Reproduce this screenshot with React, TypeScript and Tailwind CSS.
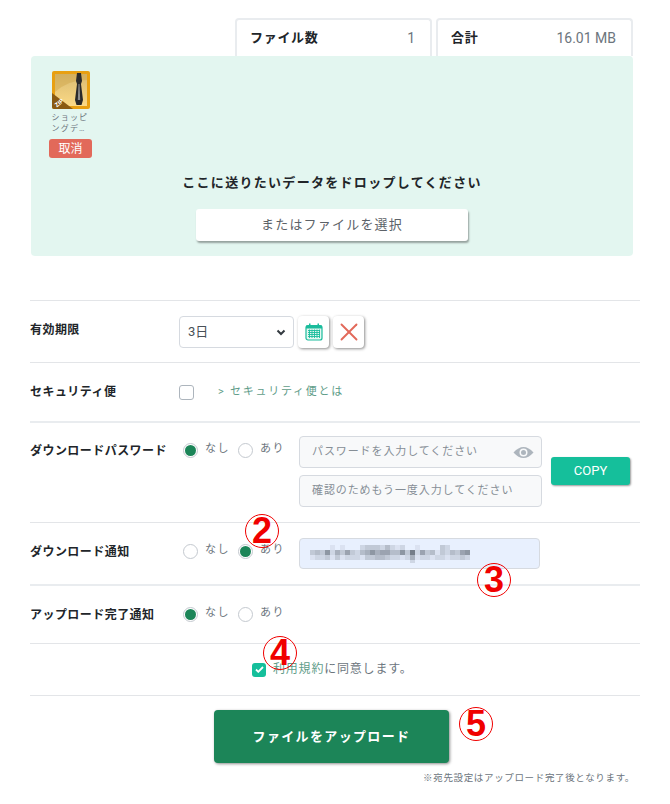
import { X } from 'lucide-react';

const font = 'font-["Roboto","Noto_Sans_CJK_JP",sans-serif]';

// blurred mail address in the screenshot, one digit per cell = darkness
const mosaicRows = [
  '00001010002333242120010000320000',
  '34372536324575664473926341324367',
  '12231312221334432212512212212232',
  '00000000000000000000200000000000',
];

function Radio({ checked }: { checked?: boolean }) {
  return (
    <span className="flex h-[15px] w-[15px] items-center justify-center rounded-full border border-[#c4c9cf] bg-white">
      {checked && <span className="h-[11px] w-[11px] rounded-full bg-[#1c8558]" />}
    </span>
  );
}

function RadioPair({ value }: { value: 'none' | 'yes' }) {
  return (
    <div className="flex w-[120px] items-center self-start pl-[4px] text-[11px] tracking-[1.5px] text-[#6c757d]">
      <Radio checked={value === 'none'} />
      <span className="ml-[7px] w-[33px] -translate-y-[1px]">なし</span>
      <Radio checked={value === 'yes'} />
      <span className="ml-[7px] -translate-y-[1px]">あり</span>
    </div>
  );
}

function Mark({ n, className }: { n: number; className: string }) {
  return (
    <div
      className={`absolute flex h-[34px] w-[34px] items-center justify-center rounded-full border border-[#f00000] text-[36px] leading-none font-bold text-[#f00000] font-["Liberation_Sans",sans-serif] ${className}`}
    >
      {n}
    </div>
  );
}

function FileIcon() {
  return (
    <svg width="38" height="38" viewBox="0 0 38 38">
      <defs>
        <linearGradient id="g" x1="0" y1="0" x2="0" y2="1">
          <stop offset="0" stopColor="#d9bb72" />
          <stop offset="1" stopColor="#fbd985" />
        </linearGradient>
      </defs>
      <rect width="38" height="38" rx="2" fill="#e8a012" />
      <rect x="3" y="3" width="32" height="32" fill="url(#g)" />
      <path d="M3 3h32v6Q16 9 3 21z" fill="#c99a3a" opacity="0.35" />
      <path d="M0 22 L21 38 H2 Q0 38 0 36 Z" fill="#8a5a12" />
      <path d="M25 2h4l1 8-1 3 2 16-1.500 5h-5L23 29l2-16-1-3z" fill="#2a2a2a" />
      <path d="M26.500 13h1l.7 16h-2.400z" fill="#8d8d8d" />
      <text x="3" y="35" fontSize="6" fontWeight="700" fill="#fff" transform="rotate(-38 6 33)" fontFamily="Roboto, sans-serif">
        ZIP
      </text>
    </svg>
  );
}

function CalendarIcon() {
  return (
    <svg width="18" height="18" viewBox="0 0 18 18" fill="none">
      <rect x="1" y="2.500" width="16" height="14.500" rx="2" fill="#e4f7f1" stroke="#1abc9c" strokeWidth="1.200" />
      <rect x="1" y="2.500" width="16" height="3" fill="#1abc9c" />
      <rect x="4" y="0.500" width="1.500" height="4" fill="#1abc9c" />
      <rect x="12.500" y="0.500" width="1.500" height="4" fill="#1abc9c" />
      <path d="M3 7.500h12M3 9.500h12M3 11.500h12M3 13.500h12M4.500 6.500v8.500M7 6.500v8.500M9.500 6.500v8.500M12 6.500v8.500M14.500 6.500v8.500" stroke="#1abc9c" strokeWidth="0.900" />
    </svg>
  );
}

function EyeIcon() {
  return (
    <svg width="21" height="13" viewBox="0 0 21 13">
      <path d="M0.500 6.500Q10.500 -4.500 20.500 6.500Q10.500 17.500 0.500 6.500z" fill="#adb5bd" />
      <circle cx="10.500" cy="6.500" r="4" fill="#f8f9fa" />
      <circle cx="10.500" cy="6.500" r="2.500" fill="#adb5bd" />
    </svg>
  );
}

function Chevron() {
  return (
    <svg width="10" height="7" viewBox="0 0 10 7" fill="none">
      <path d="M1.500 1.500 5 5l3.500-3.500" stroke="#343a40" strokeWidth="2" />
    </svg>
  );
}

function Label({ children }: { children: string }) {
  return <div className="w-[149px] shrink-0 text-[12px] font-bold tracking-[0.45px] whitespace-nowrap text-[#212529]">{children}</div>;
}

export default function App() {
  return (
    <main className={`relative min-h-[804px] w-[670px] bg-white px-[30px] pt-[18px] ${font}`}>
      <div className="ml-[205px] flex gap-[4px]">
        {[
          ['ファイル数', '1'],
          ['合計', '16.01 MB'],
        ].map(([k, v]) => (
          <div
            key={k}
            className="flex h-[38px] w-[197px] items-center justify-between rounded-t border-2 border-b-0 border-[#e9ecef] pr-[15px] pl-[13px]"
          >
            <span className="text-[13px] font-bold tracking-[0.7px] text-[#212529]">{k}</span>
            <span className="text-[14px] text-[#6c757d]">{v}</span>
          </div>
        ))}
      </div>

      <section className="ml-[1px] h-[200px] w-[602px] rounded bg-[#e3f6f0] px-[18px] pt-[15px]">
        <div className="flex w-[43px] flex-col items-center">
          <FileIcon />
          <div className="mt-[3px] h-[24px] w-[38px] text-[8px] leading-[11px] tracking-[1.2px] break-all text-[#6c757d]">
            ショッピングデ…
          </div>
          <div className="mt-[3px] flex h-[19px] w-[43px] items-center justify-center rounded-[3px] bg-[#e2695a] text-[12px] text-white">
            取消
          </div>
        </div>
        <p className="mt-[15px] text-center text-[13px] font-bold tracking-[1.3px] text-[#212529]">ここに送りたいデータをドロップしてください</p>
        <button className="mx-auto mt-[16px] block h-[32px] w-[272px] rounded-[3px] bg-white text-[13px] tracking-[1.2px] text-[#5c6268] shadow-[1px_2px_2px_rgba(0,0,0,0.35)]">
          またはファイルを選択
        </button>
      </section>

      <div className="mt-[44px]">
        <div className="flex h-[62px] items-start border-t border-[#e3e5e8] pt-[20px]">
          <Label>有効期限</Label>
          <div className="-mt-[5px] flex items-start gap-[4px]">
            <div className="flex h-[32px] w-[115px] items-center justify-between rounded border border-[#d6dae0] pr-[7px] pl-[8px] text-[13px] text-[#495057]">
              <span>3日</span>
              <Chevron />
            </div>
            <button className="flex h-[32px] w-[31px] items-center justify-center rounded bg-white shadow-[1px_1px_3px_rgba(0,0,0,0.45)]">
              <CalendarIcon />
            </button>
            <button className="flex h-[32px] w-[31px] items-center justify-center rounded bg-white shadow-[1px_1px_3px_rgba(0,0,0,0.45)]">
              <X size={30} strokeWidth={1.5} className="shrink-0 text-[#e2695a]" />
            </button>
          </div>
        </div>

        <div className="flex h-[59px] items-center border-t border-[#e3e5e8]">
          <Label>セキュリティ便</Label>
          <span className="h-[15px] w-[15px] rounded-[3px] border border-[#adb5bd] bg-white" />
          <a className="ml-[24px] text-[11px] tracking-[1.75px] text-[#5f9d89]">&gt; セキュリティ便とは</a>
        </div>

        <div className="flex h-[101px] border-t-2 border-[#e9ecef] pt-[19px]">
          <Label>ダウンロードパスワード</Label>
          <RadioPair value="none" />
          <div className="-mt-[6px]">
            <div className="flex h-[32px] w-[243px] items-center justify-between rounded border border-[#d6dae0] bg-[#f8f9fa] pr-[7px] pl-[12px] text-[11px] tracking-[0.9px] text-[#868e96]">
              <span>パスワードを入力してください</span>
              <EyeIcon />
            </div>
            <div className="mt-[7px] flex h-[32px] w-[243px] items-center rounded border border-[#d6dae0] bg-[#f8f9fa] pl-[12px] text-[11px] tracking-[0.9px] text-[#868e96]">
              確認のためもう一度入力してください
            </div>
          </div>
          <button className="mt-[15px] ml-[9px] h-[28px] w-[79px] rounded-[3px] bg-[#15bf9b] text-[13px] text-white shadow-[1px_1px_2px_rgba(0,0,0,0.4)]">
            COPY
          </button>
        </div>

        <div className="relative flex h-[62px] items-center border-t border-[#e3e5e8]">
          <div className="-mt-[3px] flex">
            <Label>ダウンロード通知</Label>
            <RadioPair value="yes" />
          </div>
          <div className="flex h-[31px] w-[241px] items-center rounded border border-[#d6dae0] bg-[#e8f0fe] pl-[10px]">
            <svg width="160" height="18" viewBox="0 0 160 18">
              {mosaicRows.map((row, r) =>
                row.split('').map((d, i) => (
                  <rect key={`${r}-${i}`} x={i * 5} y={r * 5} width="5" height="5" fill="#68707c" opacity={Number(d) / 10} />
                )),
              )}
            </svg>
          </div>
          <Mark n={2} className="top-[-9px] left-[215px]" />
          <Mark n={3} className="top-[40px] left-[447px]" />
        </div>

        <div className="flex h-[59px] items-center border-t-2 border-[#e9ecef]">
          <Label>アップロード完了通知</Label>
          <div className="flex self-center">
            <RadioPair value="none" />
          </div>
        </div>

        <div className="relative flex h-[52px] items-center border-t border-[#e3e5e8] pl-[222px]">
          <span className="flex h-[14px] w-[14px] items-center justify-center rounded-[3px] bg-[#15bf9b]">
            <svg width="9" height="7" viewBox="0 0 9 7" fill="none">
              <path d="M1 3.500 3.300 5.800 8 1" stroke="#fff" strokeWidth="1.800" />
            </svg>
          </span>
          <span className="ml-[7px] -translate-y-[1px] text-[12px] tracking-[0.8px] text-[#6c757d]">
            <a className="text-[#5f9d89]">利用規約</a>に同意します。
          </span>
          <Mark n={4} className="top-[-8px] left-[233px]" />
        </div>

        <div className="relative border-t border-[#e3e5e8] pt-[14px]">
          <button className="ml-[184px] block h-[53px] w-[235px] rounded bg-[#1c8558] text-[13px] font-bold tracking-[1.35px] text-white shadow-[1px_1px_3px_rgba(0,0,0,0.45)]">
            ファイルをアップロード
          </button>
          <p className="mt-[8px] mr-[5px] text-right text-[9.500px] tracking-[0.65px] text-[#6c757d]">※宛先設定はアップロード完了後となります。</p>
          <Mark n={5} className="top-[11px] left-[429px]" />
        </div>
      </div>
    </main>
  );
}
